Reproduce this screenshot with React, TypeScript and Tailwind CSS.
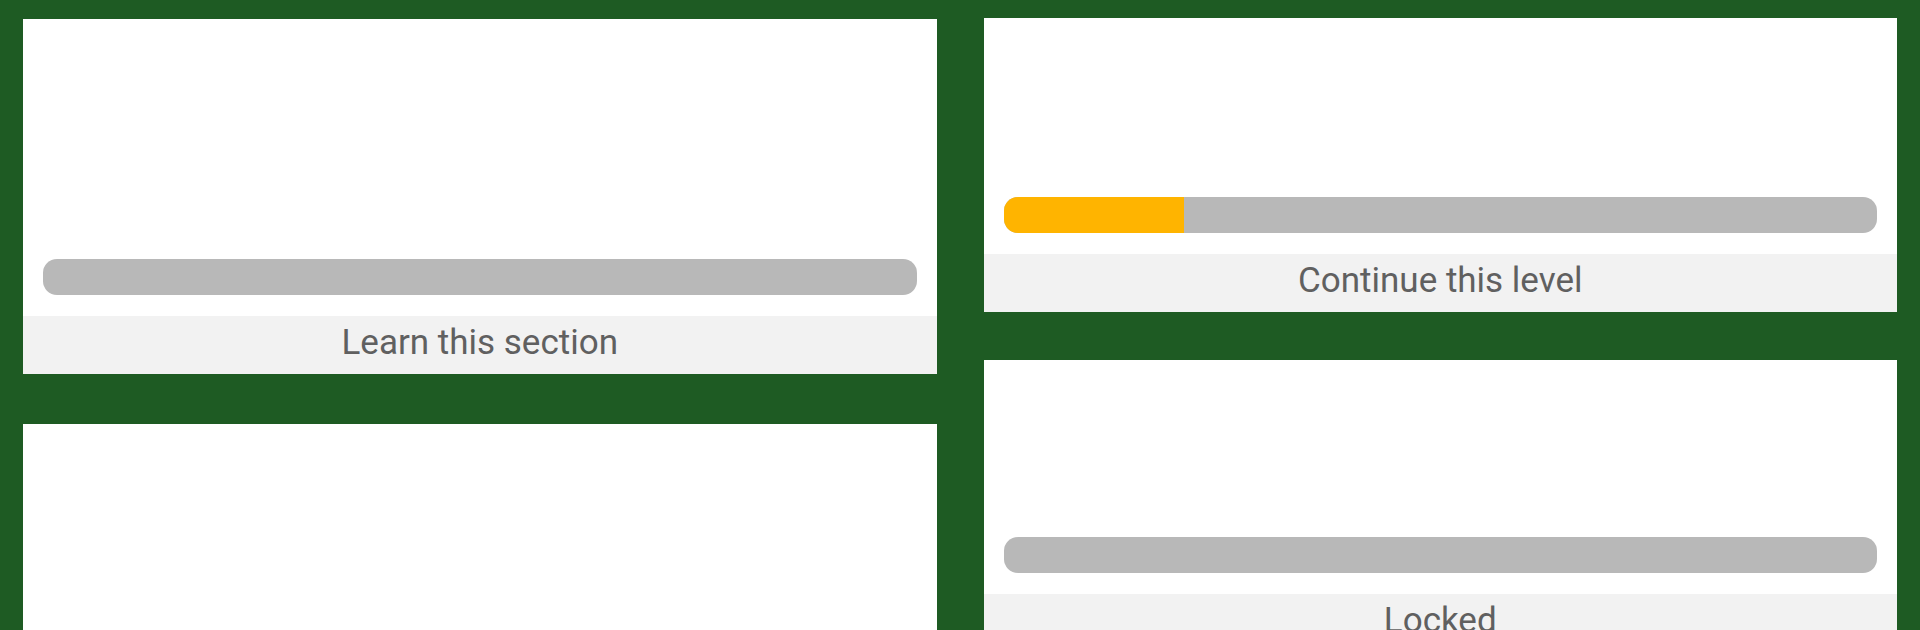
type LevelCardProps = {
  top: number
  filled: number
  label?: string
}

function LevelCard({ top, filled, label }: LevelCardProps) {
  return (
    <div className="bg-white flex flex-col">
      <div className="flex flex-col justify-end px-[20px] pb-[21px]" style={{ height: top }}>
        <div className="h-[36px] w-full rounded-[14px] bg-[#b8b8b8] overflow-hidden flex">
          {filled > 0 ? <div className="h-full bg-[#ffb400]" style={{ width: filled }} /> : null}
        </div>
      </div>
      <div className="h-[58px] bg-[#f2f2f2] flex items-center justify-center pb-[5px]">
        {label ? (
          <span className="text-[35px] text-[#606060] font-['Roboto',sans-serif] leading-none">{label}</span>
        ) : null}
      </div>
    </div>
  )
}

export default function App() {
  return (
    <div className="h-[630px] w-[1920px] overflow-hidden bg-[#1e5b23] flex gap-[47px] px-[23px]">
      <div className="flex-1 flex flex-col gap-[50px] pt-[19px]">
        <LevelCard top={297} filled={0} label="Learn this section" />
        <LevelCard top={297} filled={0} />
      </div>
      <div className="flex-1 flex flex-col gap-[48px] pt-[18px]">
        <LevelCard top={236} filled={180} label="Continue this level" />
        <LevelCard top={234} filled={0} label="Locked" />
      </div>
    </div>
  )
}
